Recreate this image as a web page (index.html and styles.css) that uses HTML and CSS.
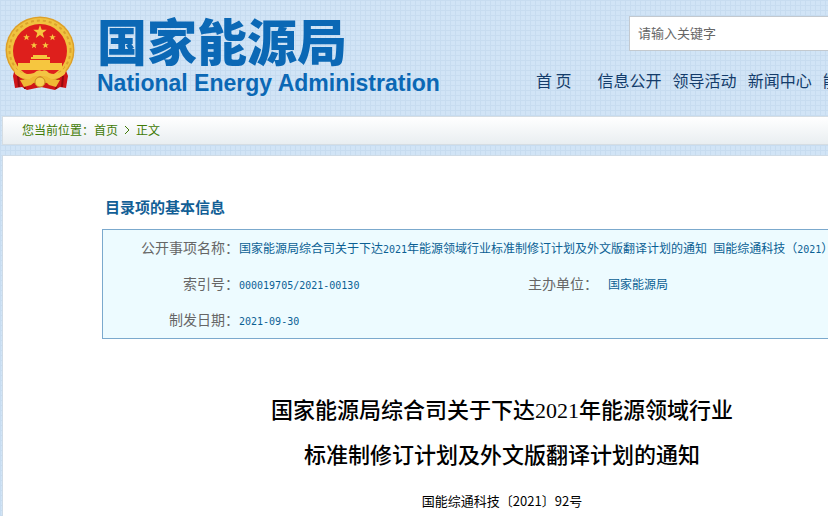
FILE: index.html
```
<!DOCTYPE html>
<html lang="zh-CN">
<head>
  <meta charset="utf-8">
  <title>国家能源局</title>
  <link rel="stylesheet" href="styles.css">
</head>
<body>
  <div class="page">
    <header class="header">
      <a class="logo" href="#">
        <svg class="emblem" viewBox="0 0 72 78" aria-hidden="true">
          <path d="M10 52 L8 60 L10 72 L17 71 L22 74 L36 71 L50 74 L55 71 L61 72 L63 60 L60 52Z" fill="#cf1518"/>
          <path d="M13 60L14 71M19 62L20 73M58 60L57 71M52 62L51 73" stroke="#960c10" stroke-width="2"/>
          <ellipse cx="35" cy="34" rx="34.500" ry="33.500" fill="#dda02a"/>
          <ellipse cx="35" cy="34" rx="33" ry="32" fill="#f0c23f"/>
          <ellipse cx="35" cy="34" rx="30.500" ry="29.500" fill="none" stroke="#dba22d" stroke-width="2" stroke-dasharray="3 3"/>
          <circle cx="35" cy="35" r="27" fill="#de1f1c"/>
          <g fill="#f6c63f">
            <path d="M35 9l1.700 4.800h5l-4 3.200 1.500 5-4.200-3-4.200 3 1.500-5-4-3.200h5z"/>
            <path d="M21.500 18l.9 2.200h2.400l-1.900 1.600.7 2.400-2.100-1.400-2.100 1.400.7-2.400-1.900-1.600h2.400z"/>
            <path d="M47.500 18l.9 2.200h2.400l-1.900 1.600.7 2.400-2.100-1.400-2.100 1.400.7-2.400-1.900-1.600h2.400z"/>
            <path d="M29 26l.9 2.200h2.400l-1.900 1.600.7 2.400-2.100-1.400-2.100 1.400.7-2.400-1.900-1.600h2.400z"/>
            <path d="M40.500 26l.9 2.200h2.400l-1.900 1.600.7 2.400-2.100-1.400-2.100 1.400.7-2.400-1.900-1.600h2.400z"/>
            <path d="M28 39h14v2h3v2h-19v-2h2zM25 44h20v5h-20zM13 47h44v4h-44zM11 51h48l-2 3h-44z"/>
          </g>
          <path d="M9 50Q17 61 29 57Q33 53 37 55Q41 53 44 57Q54 61 61 50L60 58Q52 65 42 62Q35 59 29 62Q18 65 10 58Z" fill="#f3c443"/>
          <path d="M15 64L25 63Q29 58 35 61Q41 58 45 63L55 64L51 71L44 69L40 65Q35 62 31 65L26 69L19 71Z" fill="#efb934"/>
          <circle cx="35" cy="66" r="5" fill="#f6d052" stroke="#c98722"/>
        </svg>
        <span class="logo-text">
          <strong class="logo-cn">国家能源局</strong>
          <strong class="logo-en">National Energy Administration</strong>
        </span>
      </a>
      <div class="header-right">
        <input class="search" type="text" placeholder="请输入关键字" aria-label="请输入关键字">
        <nav class="nav">
          <a class="home" href="#">首 页</a>
          <a href="#">信息公开</a>
          <a href="#">领导活动</a>
          <a href="#">新闻中心</a>
          <a href="#">能源要闻</a>
        </nav>
      </div>
    </header>

    <div class="crumbs">
      <span>您当前位置：</span><a href="#">首页</a>
      <svg class="arrow" viewBox="0 0 6 10" aria-hidden="true"><path d="M1 1l4 4-4 4"/></svg>
      <a href="#">正文</a>
    </div>

    <main class="content">
      <h2>目录项的基本信息</h2>
      <table class="info">
        <colgroup>
          <col class="col-label">
          <col class="col-value">
          <col class="col-unit">
          <col>
        </colgroup>
        <tr>
          <th>公开事项名称：</th>
          <td colspan="3">国家能源局综合司关于下达<span class="num">2021</span>年能源领域行业标准制修订计划及外文版翻译计划的通知<span class="num"> </span>国能综通科技（<span class="num">2021</span>）</td>
        </tr>
        <tr>
          <th>索引号：</th>
          <td><span class="num">000019705/2021-00130</span></td>
          <th>主办单位：</th>
          <td class="unit">国家能源局</td>
        </tr>
        <tr>
          <th>制发日期：</th>
          <td colspan="3"><span class="num">2021-09-30</span></td>
        </tr>
      </table>

      <h1>国家能源局综合司关于下达2021年能源领域行业<br>标准制修订计划及外文版翻译计划的通知</h1>
      <p class="doc-no">国能综通科技〔2021〕92号</p>
    </main>
  </div>
</body>
</html>
```

FILE: styles.css
```
* {
  box-sizing: border-box;
}

body {
  margin: 0;
  overflow: hidden;
  font-family: "Noto Sans CJK SC", sans-serif;
  font-size: 12px;
  text-spacing-trim: space-all;
  background-color: #d1e4f6;
  background-image:
    linear-gradient(#c7dcf0 1px, transparent 1px),
    linear-gradient(90deg, #c7dcf0 1px, transparent 1px);
  background-size: 5px 5px;
}

a {
  color: inherit;
  text-decoration: none;
}

.page {
  min-width: 1000px;
  margin-left: 2px;
}

/* header */
.header {
  display: flex;
  justify-content: space-between;
  height: 116px;
}

.logo {
  display: flex;
  gap: 20px;
  padding: 16px 0 0 3px;
  color: #0b68b5;
}

.emblem {
  width: 72px;
  height: 78px;
}

.logo-text {
  display: flex;
  flex-direction: column;
  gap: 8px;
}

.logo-cn {
  font-size: 50px;
  font-weight: 900;
  line-height: 46px;
}

.logo-en {
  font-family: "Liberation Sans", Arial, sans-serif;
  font-size: 23px;
  line-height: 26px;
}

.header-right {
  width: 466px;
  padding-top: 16px;
}

.search {
  display: block;
  width: 300px;
  height: 35px;
  margin-left: 93px;
  padding: 0 8px 2px;
  border: 1px solid #c3c9cf;
  background: #fff;
  font-family: inherit;
  font-size: 13px;
}

.search::placeholder {
  color: #666;
}

.nav {
  display: flex;
  gap: 11px;
  margin-top: 17px;
  font-size: 16px;
  line-height: 24px;
  color: #143c6b;
  white-space: nowrap;
}

.nav .home {
  margin-right: 15px;
}

/* current position */
.crumbs {
  display: flex;
  align-items: center;
  height: 29px;
  padding: 0 19px 2px;
  border: 1px solid #d5dde3;
  background: linear-gradient(#fff, #e9eef1);
  color: #3f7a05;
}

.arrow {
  width: 6px;
  height: 10px;
  margin: 0 6px;
  fill: none;
  stroke: #3f7a05;
}

/* content */
.content {
  min-height: 400px;
  margin-top: 10px;
  padding: 39px 99px;
  border: 1px solid #cfdbe6;
  background: #fff;
}

h2 {
  margin: 0 0 10px;
  padding-left: 3px;
  color: #135f96;
  font-size: 15px;
  line-height: 24px;
}

.info {
  width: 100%;
  table-layout: fixed;
  border: 1px solid #7ba9cd;
  border-collapse: separate;
  border-spacing: 0;
  background: #edfbff;
}

.col-label {
  width: 136px;
}

.col-value {
  width: 289px;
}

.col-unit {
  width: 70px;
}

.info th,
.info td {
  height: 36px;
  padding: 0 0 2px;
}

.info th {
  color: #666;
  font-size: 14px;
  font-weight: normal;
  text-align: right;
}

.info td {
  color: #0b5f94;
  white-space: nowrap;
}

.info .unit {
  padding-left: 10px;
}

.num {
  font-family: "DejaVu Sans Mono", monospace;
  font-size: 10px;
}

h1 {
  margin: 49px 0 0;
  font-family: "Liberation Serif", "Noto Sans CJK SC", serif;
  font-size: 22px;
  font-weight: 500;
  line-height: 45px;
  text-align: center;
}

.doc-no {
  margin: 11px 0 0;
  font-size: 13px;
  line-height: 24px;
  text-align: center;
}
```
